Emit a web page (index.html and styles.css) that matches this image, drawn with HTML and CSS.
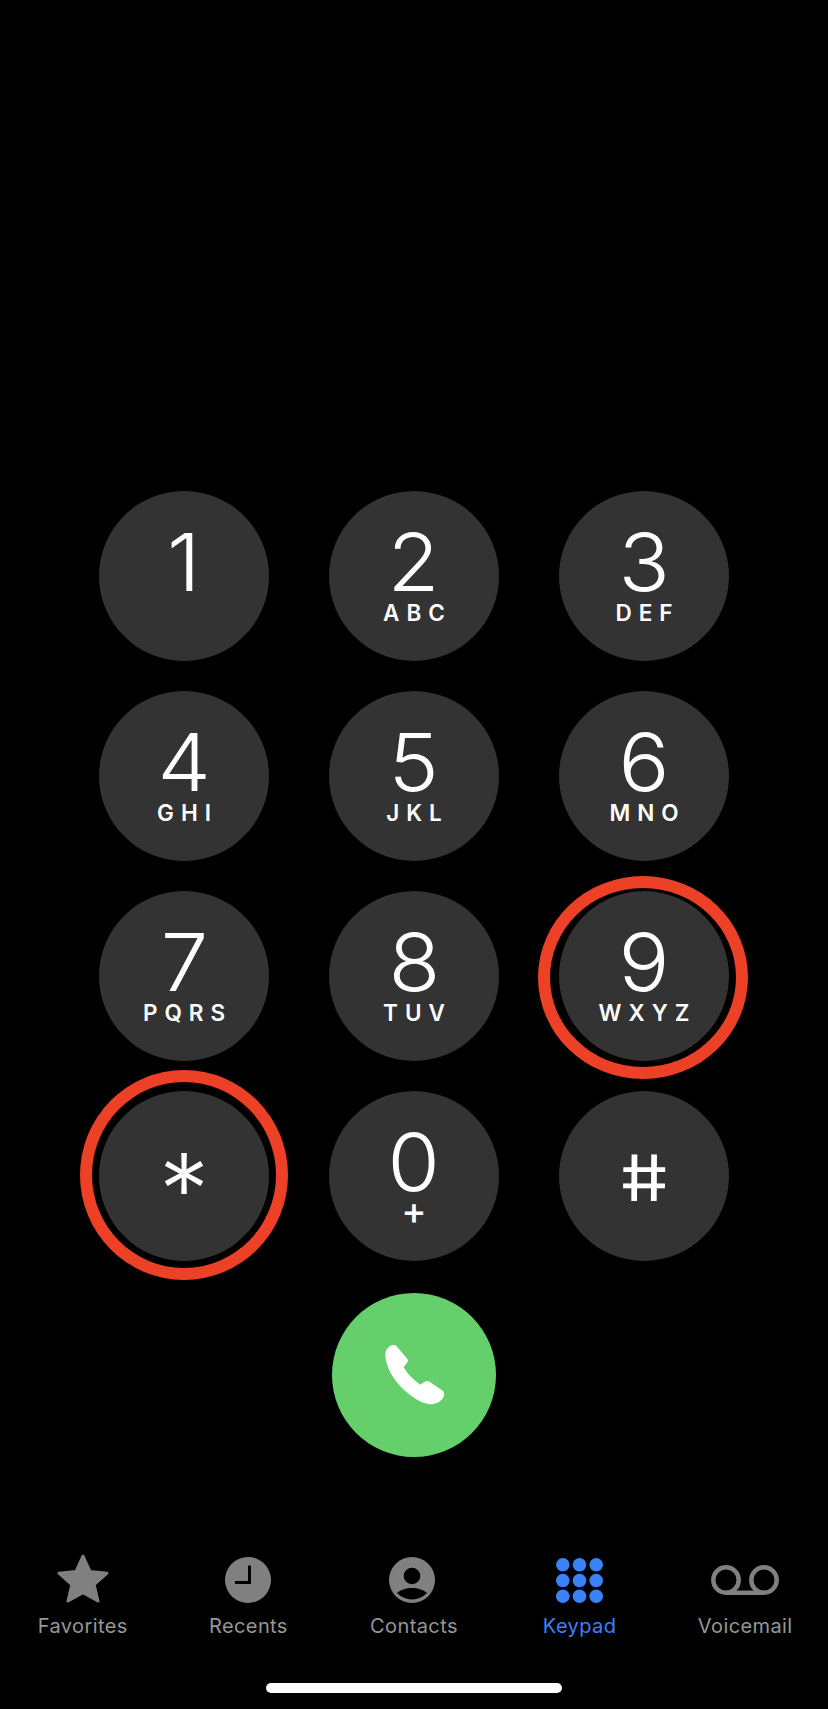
FILE: index.html
```html
<!DOCTYPE html>
<html lang="en">
<head>
    <meta charset="UTF-8">
    <meta name="viewport" content="width=device-width, initial-scale=1.0">
    <title>Keypad</title>
    <link rel="stylesheet" href="styles.css">
</head>
<body>
    <div class="page">
        <!-- Dial pad -->
        <div class="keypad">
            <div class="key"><span class="digit">1</span></div>
            <div class="key"><span class="digit">2</span><span class="letters">ABC</span></div>
            <div class="key"><span class="digit">3</span><span class="letters">DEF</span></div>
            <div class="key"><span class="digit">4</span><span class="letters">GHI</span></div>
            <div class="key"><span class="digit">5</span><span class="letters">JKL</span></div>
            <div class="key"><span class="digit">6</span><span class="letters">MNO</span></div>
            <div class="key"><span class="digit">7</span><span class="letters">PQRS</span></div>
            <div class="key"><span class="digit">8</span><span class="letters">TUV</span></div>
            <div class="key ring-nine"><span class="digit">9</span><span class="letters">WXYZ</span></div>
            <div class="key symbol ring-star"><span class="star-glyph">*</span></div>
            <div class="key"><span class="digit">0</span><span class="plus">+</span></div>
            <div class="key symbol"><span class="hash-glyph">#</span></div>
        </div>

        <!-- Call button -->
        <div class="call">
            <svg class="call-icon" viewBox="0 0 228 222">
                <path d="M28 50C28 35 38 24 50 21C56 20 60 22 63 26L92 60C97 66 97 71 92 76L83 87C92 105 112 126 133 140L146 131C151 128 156 128 161 131L198 157C204 161 207 168 203 176C197 189 180 200 160 199C110 190 30 120 28 50Z" fill="#fff"/>
            </svg>
        </div>

        <!-- Tab bar -->
        <div class="tabs">
            <div class="tab">
                <div class="tab-icon">
                    <svg width="52" height="52" viewBox="0 0 52 52">
                        <path d="M26 2L33 17.5L50 19.2L37.1 30.5L41 47L26 38.7L11 47L14.9 30.5L2 19.2L19 17.5Z" fill="#808080" stroke="#808080" stroke-width="3" stroke-linejoin="round"/>
                    </svg>
                </div>
                <span>Favorites</span>
            </div>
            <div class="tab">
                <div class="tab-icon">
                    <svg width="46" height="46" viewBox="0 0 46 46">
                        <circle cx="23" cy="23" r="23" fill="#808080"/>
                        <path d="M24.5 8.5V25.5H10" fill="none" stroke="#000" stroke-width="3"/>
                    </svg>
                </div>
                <span>Recents</span>
            </div>
            <div class="tab">
                <div class="tab-icon contact-icon">
                    <svg width="46" height="46" viewBox="0 0 46 46">
                        <circle cx="23" cy="23" r="23" fill="#808080"/>
                        <circle cx="23" cy="19" r="8.3" fill="#000"/>
                        <path d="M8 36C11 33 17 31 23 31C29 31 35 33 38 36A20.5 20.5 0 0 1 8 36Z" fill="#000"/>
                    </svg>
                </div>
                <span>Contacts</span>
            </div>
            <div class="tab active">
                <div class="tab-icon">
                    <svg width="47" height="45" viewBox="0 0 47 45" fill="#3a82f7">
                        <circle cx="6.8" cy="6.8" r="6.8"/><circle cx="23.5" cy="6.8" r="6.8"/><circle cx="40.2" cy="6.8" r="6.8"/>
                        <circle cx="6.8" cy="22.5" r="6.8"/><circle cx="23.5" cy="22.5" r="6.8"/><circle cx="40.2" cy="22.5" r="6.8"/>
                        <circle cx="6.8" cy="38.2" r="6.8"/><circle cx="23.5" cy="38.2" r="6.8"/><circle cx="40.2" cy="38.2" r="6.8"/>
                    </svg>
                </div>
                <span>Keypad</span>
            </div>
            <div class="tab">
                <div class="tab-icon">
                    <svg width="68" height="30" viewBox="0 0 68 30" fill="none" stroke="#808080" stroke-width="4.5">
                        <circle cx="15" cy="15" r="12.7"/>
                        <circle cx="53" cy="15" r="12.7"/>
                        <path d="M15 27.7H53"/>
                    </svg>
                </div>
                <span>Voicemail</span>
            </div>
        </div>

        <div class="home-bar"></div>
    </div>
</body>
</html>
```

FILE: styles.css
```css
body {
    margin: 0;
    background-color: #000;
    color: #fff;
    font-family: Inter, "Liberation Sans", sans-serif;
}

.page {
    height: 1709px;
    overflow: hidden;
    display: flex;
    flex-direction: column;
    align-items: center;
}

/* Dial pad */
.keypad {
    display: grid;
    grid-template-columns: repeat(3, 170px);
    grid-auto-rows: 170px;
    column-gap: 60px;
    row-gap: 30px;
    margin-top: 491px;
}

.key {
    position: relative;
    display: flex;
    flex-direction: column;
    align-items: center;
    border-radius: 50%;
    background-color: #333;
}

.key.symbol {
    justify-content: center;
}

.digit {
    height: 70px;
    margin-top: 36px;
    font-size: 80px;
    font-weight: 300;
    line-height: 70px;
    transform: scaleX(1.06);
}

.letters {
    margin-top: 3px;
    padding-left: 7px;
    font-size: 22.5px;
    font-weight: 600;
    line-height: 26px;
    letter-spacing: 7px;
}

.plus {
    margin-top: -4px;
    font-size: 38px;
    font-weight: 500;
    line-height: 34px;
}

.star-glyph {
    height: 92px;
    margin-top: 28px;
    font-size: 100px;
    font-weight: 300;
    line-height: 92px;
}

.hash-glyph {
    margin-top: 4px;
    font-size: 64px;
    font-weight: 400;
    line-height: 64px;
    transform: scaleX(1.2) skewX(9deg);
}

/* Hand drawn red annotations */
.ring-nine::after,
.ring-star::after {
    content: "";
    position: absolute;
    border: 12px solid #ec4027;
    border-radius: 50%;
}

.ring-nine::after {
    top: -15px;
    right: -19px;
    bottom: -18px;
    left: -21px;
}

.ring-star::after {
    top: -21px;
    right: -19px;
    bottom: -19px;
    left: -19px;
}

/* Call button */
.call {
    display: flex;
    align-items: center;
    justify-content: center;
    width: 164px;
    height: 164px;
    margin-top: 32px;
    border-radius: 50%;
    background-color: #65d06b;
}

.call-icon {
    width: 76px;
    height: 74px;
}

/* Tab bar */
.tabs {
    display: grid;
    grid-template-columns: repeat(5, 1fr);
    width: 100%;
    margin-top: 97px;
}

.tab {
    display: flex;
    flex-direction: column;
    align-items: center;
    color: #969696;
    font-size: 20px;
    line-height: 24px;
    letter-spacing: 0.4px;
}

.tab.active {
    color: #3a82f7;
}

.tab-icon {
    display: flex;
    align-items: center;
    justify-content: center;
    height: 52px;
    margin-bottom: 8px;
}

.contact-icon {
    margin-right: 3px;
}

.home-bar {
    width: 296px;
    height: 10px;
    margin-top: 45px;
    border-radius: 5px;
    background-color: #fff;
}
```
